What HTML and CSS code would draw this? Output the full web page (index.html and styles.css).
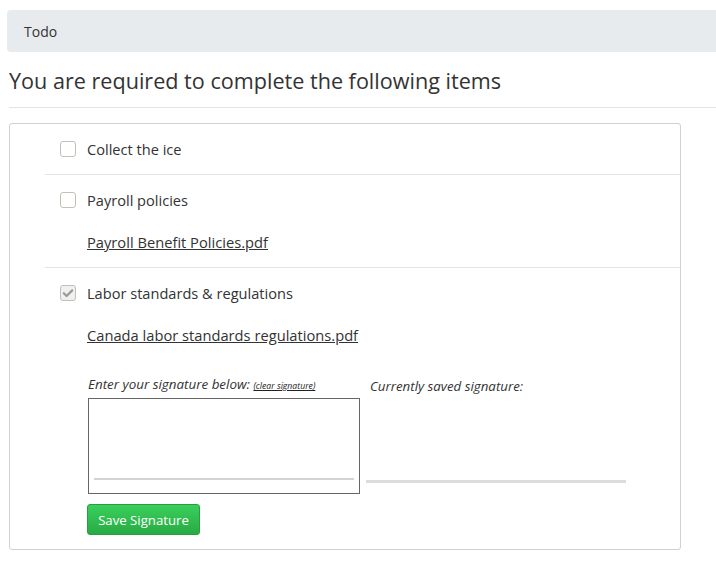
FILE: index.html
```html
<!DOCTYPE html>
<html>
<head>
<meta charset="utf-8">
<link rel="stylesheet" href="styles.css">
</head>
<body>
<div class="page">
  <div class="crumb">Todo</div>
  <h1 class="title">You are required to complete the following items</h1>
  <div class="card">
    <div class="item">
      <div class="line">
        <span class="check"></span>
        <span class="label">Collect the ice</span>
      </div>
    </div>
    <div class="item">
      <div class="line">
        <span class="check"></span>
        <span class="label">Payroll policies</span>
      </div>
      <a class="doc" href="#">Payroll Benefit Policies.pdf</a>
    </div>
    <div class="item last">
      <div class="line">
        <span class="check checked"><svg viewBox="0 0 16 16" width="16" height="16"><path d="M3.8 8.2 L6.6 11 L12.2 5.4" fill="none" stroke="#999" stroke-width="2.2" stroke-linecap="round" stroke-linejoin="round"/></svg></span>
        <span class="label">Labor standards &amp; regulations</span>
      </div>
      <a class="doc" href="#">Canada labor standards regulations.pdf</a>
      <div class="sig">
        <div class="sig-col">
          <div class="sig-label">Enter your signature below: <a class="clear" href="#">(clear signature)</a></div>
          <div class="pad"><div class="pad-line"></div></div>
          <button class="save">Save Signature</button>
        </div>
        <div class="saved-col">
          <div class="saved-label">Currently saved signature:</div>
          <div class="saved-line"></div>
        </div>
      </div>
    </div>
  </div>
</div>
</body>
</html>
```
FILE: styles.css
```css
html, body {
  margin: 0;
  padding: 0;
  background: #fff;
  overflow-x: hidden;
}
body {
  font-family: "Open Sans", "DejaVu Sans", sans-serif;
  color: #333;
}
.page {
  padding: 10px 0 0 9px;
}
.crumb {
  margin-left: -2px;
  margin-right: -10px;
  height: 42px;
  box-sizing: border-box;
  background: #e8ebee;
  border-radius: 4px;
  padding: 0 17px;
  display: flex;
  align-items: center;
  font-size: 14px;
  color: #333;
}
.title {
  margin: 0;
  padding: 15px 0 0 0;
  font-size: 21.6px;
  font-weight: 400;
  line-height: 28px;
  color: #333;
  height: 40px;
  border-bottom: 1px solid #e3e3e3;
}
.card {
  margin-top: 15px;
  width: 672px;
  box-sizing: border-box;
  border: 1px solid #d0d0d0;
  border-radius: 3px;
  padding-left: 35px;
}
.item {
  border-bottom: 1px solid #e3e3e3;
  padding: 15px 0 15px 15px;
  display: flex;
  flex-direction: column;
  align-items: flex-start;
}
.item.last {
  border-bottom: none;
  padding-bottom: 14px;
}
.line {
  display: flex;
  align-items: center;
  height: 20px;
}
.check {
  width: 16px;
  height: 16px;
  box-sizing: border-box;
  border: 1px solid #c6bfb8;
  border-radius: 3px;
  background: #fff;
  margin-right: 11px;
  display: flex;
  align-items: center;
  justify-content: center;
}
.check.checked {
  background: #f0f0f0;
}
.check svg {
  display: block;
  margin: -1px;
}
.label {
  font-size: 14.6px;
  line-height: 20px;
}
.doc {
  margin: 22px 0 0 27px;
  font-size: 14.7px;
  line-height: 20px;
  color: #333;
  text-decoration: underline;
}
.sig {
  display: flex;
  margin: 31px 0 0 27px;
}
.sig-col {
  display: flex;
  flex-direction: column;
  align-items: flex-start;
  width: 279px;
}
.sig-label {
  font-size: 13.4px;
  font-style: italic;
  line-height: 16px;
  height: 22px;
  margin-left: 1px;
}
.clear {
  font-size: 8.7px;
  color: #222;
  text-decoration: underline;
}
.pad {
  width: 272px;
  height: 96px;
  margin-left: 1px;
  box-sizing: border-box;
  border: 1px solid #666;
  display: flex;
  align-items: flex-end;
  padding: 0 5px 13px 5px;
}
.pad-line {
  width: 100%;
  height: 2px;
  background: #d3d3d3;
}
.save {
  margin-top: 10px;
  width: 113px;
  height: 31px;
  box-sizing: border-box;
  border: 1px solid #24a03e;
  border-radius: 3px;
  background: linear-gradient(#3bcf5c, #27ab44);
  color: #fff;
  font-family: "Open Sans", sans-serif;
  font-size: 13.2px;
  font-weight: 500;
  padding: 0;
}
.saved-col {
  display: flex;
  flex-direction: column;
  width: 260px;
}
.saved-label {
  font-size: 13.3px;
  font-style: italic;
  line-height: 16px;
  padding: 2px 0 0 4px;
  height: 104px;
  box-sizing: border-box;
}
.saved-line {
  height: 3px;
  background: #dcdcdc;
  width: 260px;
}
```
